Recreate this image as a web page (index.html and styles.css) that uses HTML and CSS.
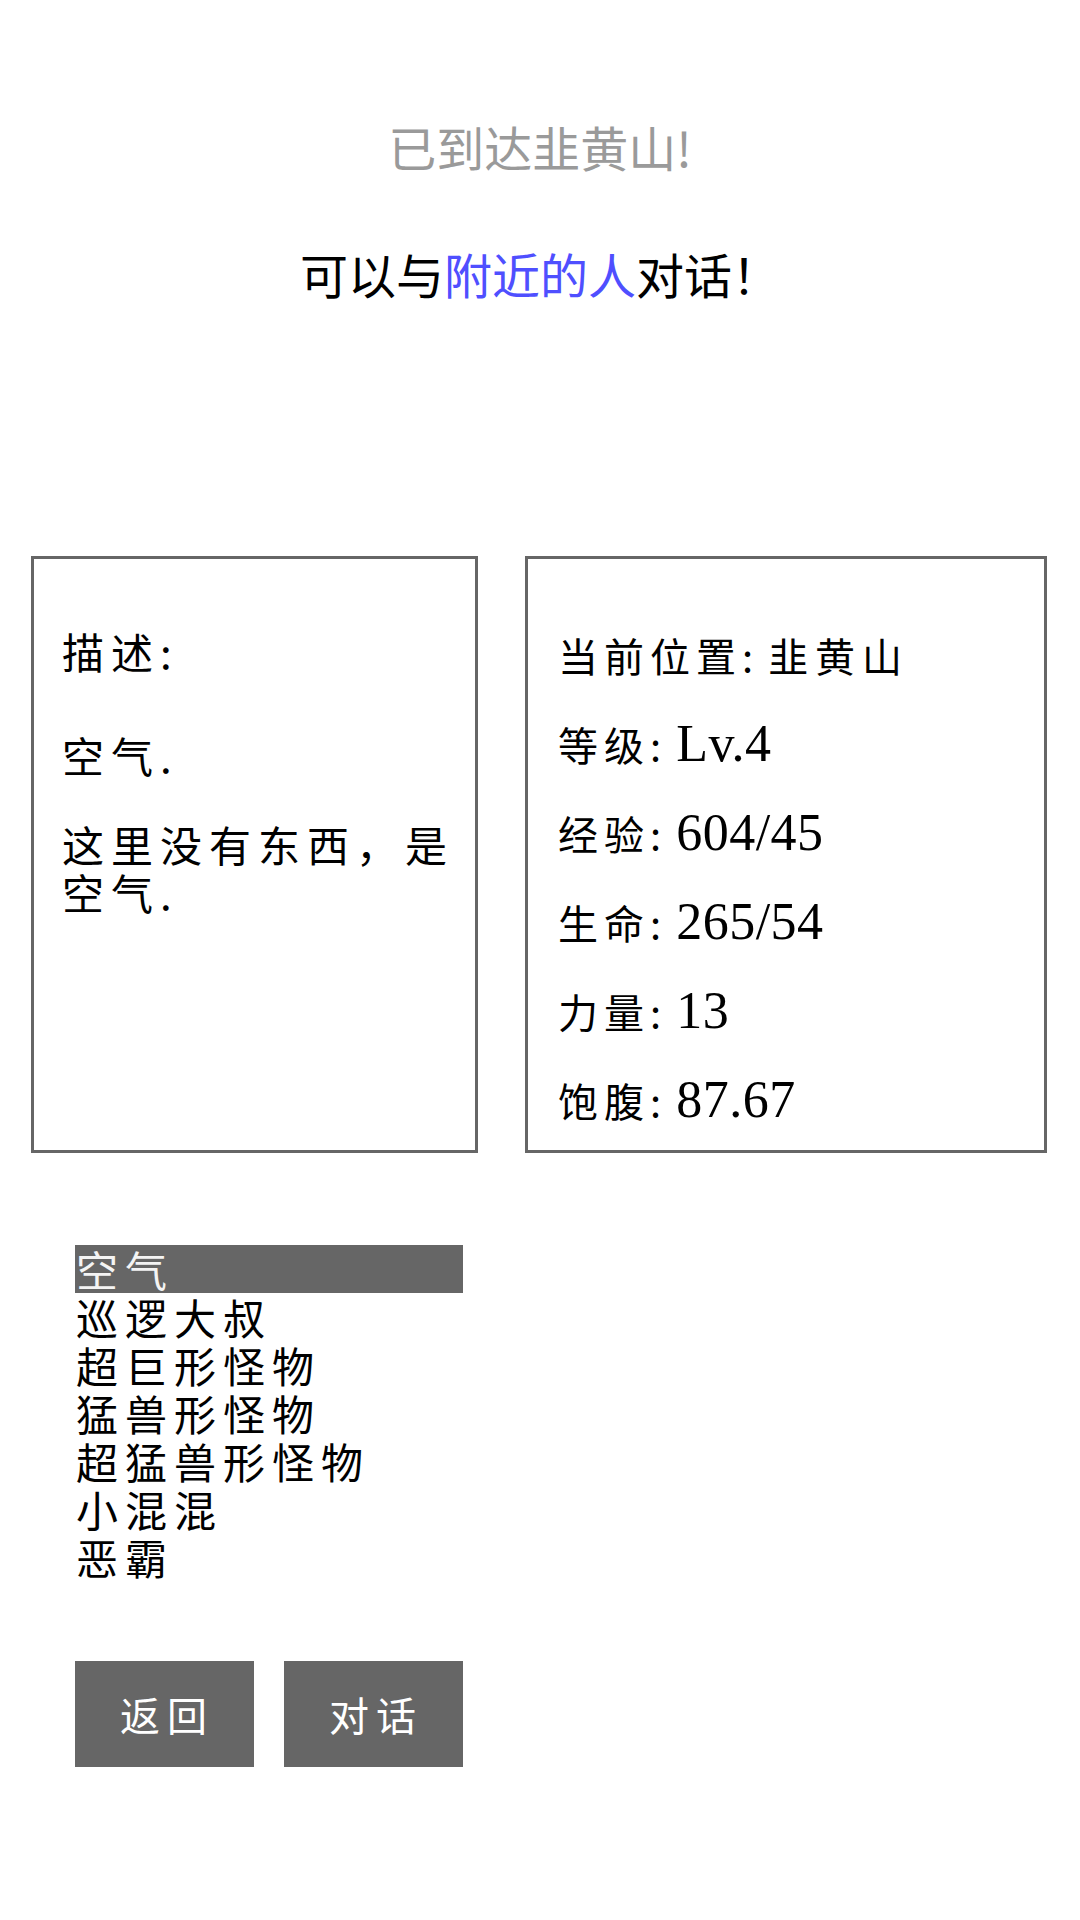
FILE: index.html
```html
<!DOCTYPE html>
<html lang="zh-CN">
<head>
<meta charset="utf-8">
<title>韭黄山</title>
<link rel="stylesheet" href="styles.css">
</head>
<body>
<div class="page">
  <div class="title">已到达韭黄山!</div>
  <div class="hint">可以与<span class="link">附近的人</span>对话！</div>

  <div class="panels">
    <div class="panel desc">
      <p class="p1">描述:</p>
      <p class="p2">空气.</p>
      <p class="p3">这里没有东西，是空气.</p>
    </div>
    <div class="panel stats">
      <div class="row"><span class="k">当前位置:</span><span class="v">韭黄山</span></div>
      <div class="row"><span class="k">等级:</span><span class="num">Lv.4</span></div>
      <div class="row"><span class="k">经验:</span><span class="num">604/45</span></div>
      <div class="row"><span class="k">生命:</span><span class="num">265/54</span></div>
      <div class="row"><span class="k">力量:</span><span class="num">13</span></div>
      <div class="row"><span class="k">饱腹:</span><span class="num">87.67</span></div>
    </div>
  </div>

  <ul class="list">
    <li class="sel">空气</li>
    <li>巡逻大叔</li>
    <li>超巨形怪物</li>
    <li>猛兽形怪物</li>
    <li>超猛兽形怪物</li>
    <li>小混混</li>
    <li>恶霸</li>
  </ul>

  <div class="buttons">
    <div class="btn">返回</div>
    <div class="btn">对话</div>
  </div>
</div>
</body>
</html>
```

FILE: styles.css
```css
html, body {
  margin: 0;
  padding: 0;
  background: #ffffff;
}

body {
  font-family: "Noto Sans CJK SC", "Noto Sans", sans-serif;
  color: #000;
}

.page {
  width: 1080px;
  min-height: 1920px;
}

.title {
  padding-top: 122px;
  text-align: center;
  font-size: 48px;
  line-height: 48px;
  color: #9a9a9a;
}

.hint {
  margin-top: 79px;
  text-align: center;
  font-size: 48px;
  line-height: 48px;
  color: #000;
}

.link {
  color: #4f4fff;
}

.panels {
  display: flex;
  gap: 47px;
  margin-top: 259px;
  padding-left: 31px;
}

.panel {
  box-sizing: border-box;
  height: 597px;
  border: 3px solid #666666;
}

.desc {
  width: 447px;
  padding: 68px 10px 0 28px;
  font-size: 42px;
  line-height: 48px;
  letter-spacing: 7px;
}

.desc p {
  margin: 0;
}

.desc .p2 {
  margin-top: 56px;
}

.desc .p3 {
  margin-top: 41px;
}

.stats {
  width: 522px;
  padding: 72px 0 0 30px;
  display: flex;
  flex-direction: column;
  gap: 41px;
}

.row {
  font-size: 40px;
  line-height: 48px;
  height: 48px;
  white-space: nowrap;
}

.k {
  letter-spacing: 6px;
  margin-right: 9px;
}

.v {
  letter-spacing: 7px;
}

.num {
  font-family: "Liberation Serif", serif;
  font-size: 52px;
  letter-spacing: 0.5px;
}

.list {
  list-style: none;
  margin: 92px 0 0 75px;
  padding: 0;
  width: 388px;
  font-size: 42px;
  line-height: 48px;
  letter-spacing: 7px;
}

.list li {
  height: 48px;
  padding-left: 1px;
  white-space: nowrap;
}

.list .sel {
  background: #666666;
  color: #f4f4f4;
}

.buttons {
  display: flex;
  gap: 30px;
  margin: 80px 0 0 75px;
}

.btn {
  width: 179px;
  height: 106px;
  background: #666666;
  color: #ffffff;
  font-size: 40px;
  letter-spacing: 7px;
  display: flex;
  align-items: center;
  justify-content: center;
  padding-left: 5px;
  box-sizing: border-box;
}
```
